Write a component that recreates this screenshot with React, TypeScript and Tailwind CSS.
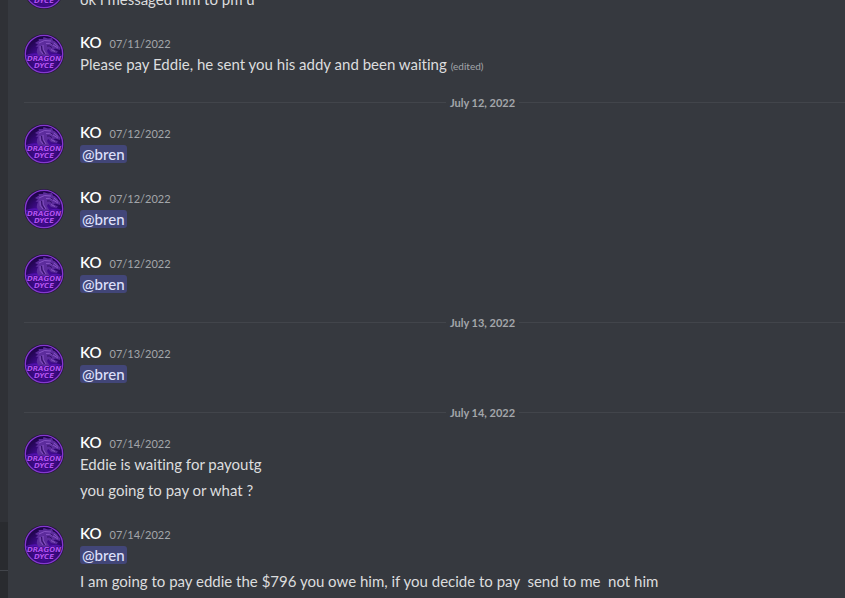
import React from "react";

type Message = {
    date: string;
    lines: { text: string; mention?: boolean; edited?: boolean }[];
};

type Group = { day?: string; messages: Message[] };

const mention = { text: "@bren", mention: true };

const groups: Group[] = [
    {
        messages: [
            { date: "07/11/2022", lines: [{ text: "ok i messaged him to pm u" }] },
            {
                date: "07/11/2022",
                lines: [{ text: "Please pay Eddie, he sent you his addy and been waiting", edited: true }],
            },
        ],
    },
    {
        day: "July 12, 2022",
        messages: [
            { date: "07/12/2022", lines: [mention] },
            { date: "07/12/2022", lines: [mention] },
            { date: "07/12/2022", lines: [mention] },
        ],
    },
    { day: "July 13, 2022", messages: [{ date: "07/13/2022", lines: [mention] }] },
    {
        day: "July 14, 2022",
        messages: [
            { date: "07/14/2022", lines: [{ text: "Eddie is waiting for payoutg" }, { text: "you going to pay or what ?" }] },
            {
                date: "07/14/2022",
                lines: [mention, { text: "I am going to pay eddie the $796 you owe him, if you decide to pay  send to me  not him" }],
            },
        ],
    },
];

function Avatar() {
    return (
        <svg viewBox="0 0 40 40" className="mt-0.5 size-10 shrink-0" role="img" aria-label="KO">
            <defs>
                <radialGradient id="glow" cx="50%" cy="65%" r="60%">
                    <stop offset="0" stopColor="#5a10b8" />
                    <stop offset="0.5" stopColor="#3c0a86" />
                    <stop offset="1" stopColor="#1e0548" />
                </radialGradient>
            </defs>
            <circle cx="20" cy="20" r="20" fill="#25163c" />
            <circle cx="20" cy="20" r="18.7" fill="url(#glow)" stroke="#8437cf" strokeWidth="1.3" />
            <path d="M2 21 Q9 18 16 20 L26 21 Q32 18 38 21 L38 23 L2 23Z" fill="#5a14bd" opacity="0.7" />
            {/* dragon: mane and neck, then head with open jaw */}
            <path
                d="M11 9 L15 6.5 L14.5 5 L19 5 L19.5 3 L24 4.5 L28 4 L29 6.5 Q33 8 34 11 L36.5 13.5 L36 16 L31 14.5 L29.5 15.5 L34 17.5 L32.5 19 L27 18 L24.5 15 Q22 16 24 19 L26 22 L15 22 Q11 18 14 13 L11.5 12.5 L14 10.5Z"
                fill="#5c2c9c"
            />
            <path
                d="M15 9 Q20 5 27 7 M30 9 L34 12.5 M22 9.5 Q26 8.5 29 11 L34 14 M27 15.5 L31 17.5 M16 12 Q15 17 19 20 M19 11 Q18 15 22 20"
                fill="none"
                stroke="#8a58c6"
                strokeWidth="0.9"
            />
            <path d="M17.5 12 Q17 16 20.5 20 M23 12 Q25 11 28 13.5 M26.5 9 L29 10.5" fill="none" stroke="#2c0b5e" strokeWidth="0.9" />
            <g
                fill="#b14ff0"
                stroke="#2d0866"
                strokeWidth="0.8"
                paintOrder="stroke"
                fontFamily="DejaVu Sans, sans-serif"
                fontWeight="700"
                fontStyle="italic"
                textAnchor="middle"
            >
                <text x="20" y="27" fontSize="7">DRAGON</text>
                <text x="20" y="34" fontSize="7">DYCE</text>
            </g>
        </svg>
    );
}

// the rule runs on past the right edge of the pane
function Divider({ day }: { day: string }) {
    return (
        <div className="mt-6 -mr-24 mb-[17px] ml-4 flex h-px items-center">
            <div className="h-px flex-1 bg-[#42454b]" />
            <span className="px-1 text-[11px] leading-3 font-bold text-[#a3a6aa]">{day}</span>
            <div className="h-px flex-1 bg-[#42454b]" />
        </div>
    );
}

function ChatMessage({ message, first }: { message: Message; first: boolean }) {
    return (
        <article className={`flex gap-4 py-0.5 pl-4 ${first ? "" : "mt-[17px]"}`}>
            <Avatar />
            <div className="flex-1">
                <h3 className="flex h-[22px] items-baseline gap-2">
                    <span className="text-[15px] leading-5 font-semibold text-white">KO</span>
                    <time className="text-[11px] leading-4 text-[#a3a6aa]">{message.date}</time>
                </h3>
                <div className="flex flex-col gap-1">
                    {message.lines.map((line, i) => (
                        <p key={i} className="h-[22px] text-[15px] leading-5 whitespace-pre text-[#dcddde]">
                            {line.mention ? (
                                <a href="#" className="rounded-[3px] bg-[#424678] px-0.5 font-medium text-[#dee0fc]">{line.text}</a>
                            ) : (
                                line.text
                            )}
                            {line.edited && <span className="ml-1 text-[10px] text-[#a3a6aa]">(edited)</span>}
                        </p>
                    ))}
                </div>
            </div>
        </article>
    );
}

export default function App() {
    return (
        <div className="flex h-screen overflow-hidden bg-[#36393f] font-['Lato',sans-serif] [font-variant-ligatures:none]">
            <aside className="flex w-2 shrink-0 flex-col bg-[#2f3136]">
                <div className="flex-1" />
                <div className="h-12 bg-[#292b2f]" />
                <div className="h-7 border-t border-[#42454b] bg-[#292b2f]" />
            </aside>
            <main className="flex flex-1 flex-col justify-end pb-[3px]">
                {groups.map((group, i) => (
                    <section key={i}>
                        {group.day && <Divider day={group.day} />}
                        {group.messages.map((message, j) => (
                            <ChatMessage key={j} message={message} first={j === 0} />
                        ))}
                    </section>
                ))}
            </main>
        </div>
    );
}
